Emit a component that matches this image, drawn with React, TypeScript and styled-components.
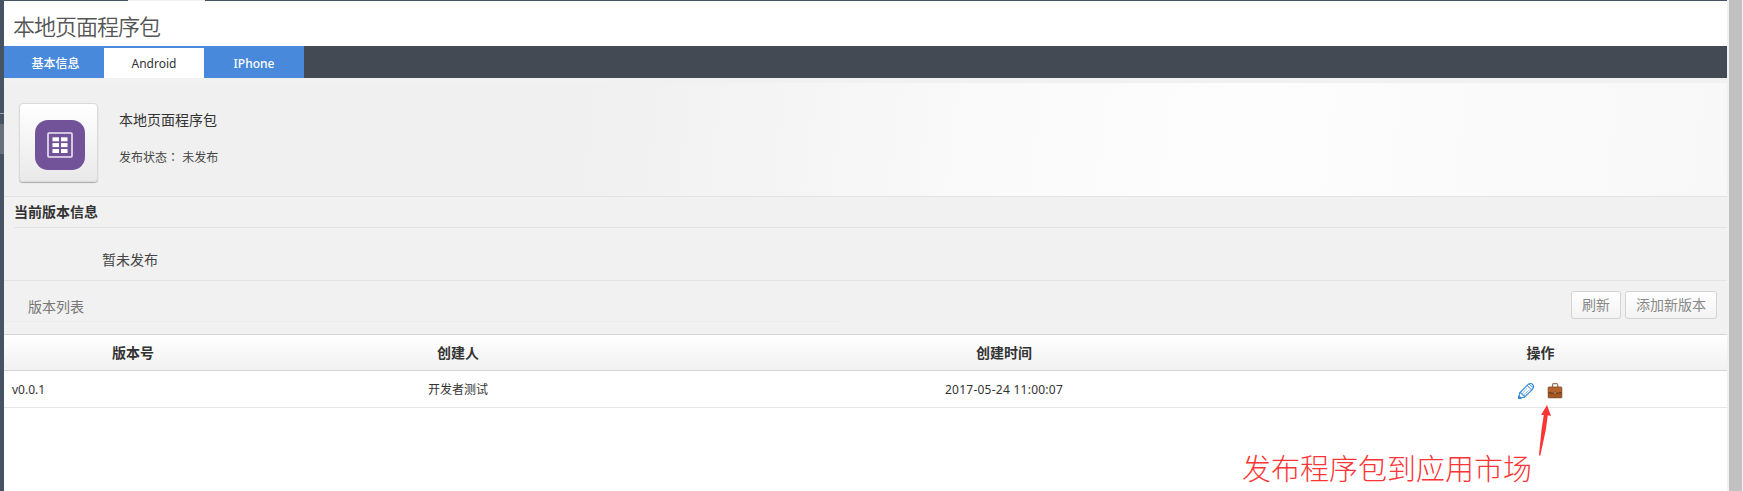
import React from "react";
import styled, { createGlobalStyle } from "styled-components";

const GlobalStyle = createGlobalStyle`
  * { box-sizing: border-box; }
  body {
    margin: 0;
    overflow: hidden;
    background: #fff;
    color: #333;
    font: 12px/1.5 "Noto Sans", "Noto Sans CJK SC", sans-serif;
  }
`;

const Frame = styled.div`
  display: grid;
  grid-template-columns: 4px minmax(0, 1fr) 16px;
  height: 491px;
`;

const Rail = styled.div`
  display: grid;
  grid-template-rows: 113px 1px 10px 30px 1fr;
  background: #465362;
`;

const RailBand = styled.div<{ $color: string; $row: number }>`
  grid-row: ${(p) => p.$row};
  background: ${(p) => p.$color};
`;

const Scrollbar = styled.div`
  padding: 0 1px 0 2px;
  background: #f1f1f1;
`;

const Thumb = styled.div`
  height: 100%;
  background: #c1c1c1;
`;

const Content = styled.main`
  display: flex;
  flex-direction: column;
  background: #fff;
`;

const TopEdge = styled.div`
  flex: none;
  height: 1px;
  background: linear-gradient(90deg, #465362 124px, #f1f1f1 124px, #f1f1f1 201px, #465362 201px);
`;

const PageTitle = styled.h1`
  flex: none;
  height: 45px;
  margin: 0;
  padding: 3px 0 0 9px;
  font-size: 22px;
  font-weight: 350;
  line-height: 45px;
  letter-spacing: -1px;
  color: #555;
`;

const TabBar = styled.nav`
  display: flex;
  flex: none;
  height: 32px;
  background: #444a54;
`;

const Tab = styled.button<{ $active?: boolean; $latin?: boolean }>`
  width: 100px;
  padding: 1px ${(p) => (p.$latin ? 0 : 0)}px 0 ${(p) => (p.$latin ? 0 : 3)}px;
  border: 0;
  border-top: 2px solid #4889db;
  background: ${(p) => (p.$active ? "#fff" : "#4889db")};
  color: ${(p) => (p.$active ? "#333" : "#fff")};
  font: inherit;
  font-weight: ${(p) => (p.$active ? 400 : 500)};
  line-height: 29px;
`;

const Hero = styled.section`
  display: flex;
  gap: 21px;
  height: 114px;
  margin-top: 5px;
  padding: 20px 0 0 15px;
  border-bottom: 1px solid #e3e3e3;
  background: linear-gradient(97deg, #f0f0f0 34%, #f5f5f5 46%, #fafafa 57%, #fdfdfd 72%, #fafafa 87%, #f8f8f8 100%);
`;

const GreyArea = styled.div`
  display: flow-root;
  flex: none;
  background: #f1f1f1;
`;

const AppCard = styled.div`
  display: flex;
  align-items: center;
  justify-content: center;
  width: 79px;
  height: 79px;
  padding: 4px 0 0 2px;
  border: 1px solid #dadada;
  border-radius: 4px;
  background: linear-gradient(#fff, #e9e9e9);
  box-shadow: 0 1px 1px #aaa;
`;

const AppInfo = styled.div`
  padding-top: 7px;
`;

const AppName = styled.div`
  font-size: 14px;
  line-height: 20px;
  margin-bottom: 18px;
`;

const AppStatus = styled.div`
  line-height: 18px;
  color: #444;
`;

const Colon = styled.span`
  font-family: "Noto Sans CJK TC", sans-serif;
`;

const SectionTitle = styled.h2`
  height: 31px;
  margin: 0 0 0 10px;
  border-bottom: 1px solid #e3e3e3;
  font-size: 14px;
  font-weight: 700;
  line-height: 29px;
`;

const CurrentVersion = styled.div`
  height: 53px;
  padding: 11px 0 0 98px;
  border-bottom: 1px solid #e3e3e3;
  font-size: 14px;
  line-height: 42px;
  color: #444;
`;

const ListToolbar = styled.div`
  display: flex;
  align-items: center;
  gap: 4px;
  height: 53px;
  padding: 0 10px 5px 24px;
  background: linear-gradient(#ebebeb, #ebebeb) 0 40px / 836px 1px no-repeat;
`;

const ListTitle = styled.div`
  flex: 1;
  padding-top: 2px;
  font-size: 14px;
  color: #777;
`;

const Button = styled.button<{ $width: number }>`
  width: ${(p) => p.$width}px;
  height: 28px;
  padding: 0;
  border: 1px solid #d4d4d4;
  border-radius: 3px;
  background: linear-gradient(#fff, #f3f3f3);
  color: #888;
  font: inherit;
  font-size: 14px;
  line-height: 26px;
`;

const Table = styled.div`
  flex: none;
`;

const Row = styled.div<{ $header?: boolean }>`
  display: grid;
  grid-template-columns: 258px 392px 700px 373px;
  align-items: center;
  height: 37px;
  border-bottom: 1px solid ${(p) => (p.$header ? "#d2d6da" : "#e4e7e8")};
  ${(p) =>
    p.$header &&
    `
    border-top: 1px solid #d2d4d6;
    background: linear-gradient(#fff, #f1f1f1);
    font-size: 14px;
    font-weight: 700;
  `}
`;

const Cell = styled.div<{ $left?: boolean; $body?: boolean }>`
  padding-top: ${(p) => (p.$body ? 2 : 0)}px;
  padding-left: ${(p) => (p.$left ? 8 : 0)}px;
  text-align: ${(p) => (p.$left ? "left" : "center")};
`;

const DateText = styled.span`
  letter-spacing: 0.25px;
`;

const Actions = styled.div`
  display: flex;
  justify-content: center;
  gap: 13px;
  padding-top: 3px;
`;

const Note = styled.div`
  position: absolute;
  left: 1242px;
  top: 447px;
  color: #fb3535;
  font-size: 29px;
  font-weight: 300;
  line-height: 44px;
  white-space: nowrap;
`;

const Arrow = styled.svg`
  position: absolute;
  left: 1536px;
  top: 404px;
`;

const AppIcon = () => (
  <svg width="50" height="50" viewBox="0 0 50 50">
    <rect width="50" height="50" rx="13" fill="#725399" />
    <rect x="13" y="13" width="24" height="24" rx="1" fill="none" stroke="#ede7f4" strokeWidth="1.6" />
    {[17.3, 23.1, 29].map((y) => (
      <g key={y} fill="#fff">
        <rect x="17.5" y={y} width="6.5" height="4" />
        <rect x="26" y={y} width="6.5" height="4" />
      </g>
    ))}
  </svg>
);

const PencilIcon = () => (
  <svg width="16" height="16" viewBox="0 0 16 16" fill="none" stroke="#3187cf" strokeWidth="1.1" strokeLinejoin="round">
    <path d="M.6 15.4 1.6 10 9.6 1.8Q12.4-.5 14.6 1.4 16.6 3.5 14.4 6.4L6.3 14.3Z" />
    <path d="M1.6 10 3.8 10.2 4.2 11.8 6 12.2 6.3 14.3" />
    <path d="M8.8 2.6 10.4 3.3 11.2 4.9 12.8 5.5 13.5 7.2M10.8 1.2 12.5 2 13.2 3.3 15 4.2" strokeWidth=".9" />
    <path d="m4.8 9.7 4.6-4.5M6.4 11.5l4.8-4.7" strokeWidth=".8" strokeDasharray="1.4 .6" />
    <path d="M.6 15.4 1 13 3 15Z" fill="#3187cf" />
  </svg>
);

const BriefcaseIcon = () => (
  <svg width="16" height="16" viewBox="0 0 16 16">
    <rect x=".5" y="14.5" width="15.3" height="1" fill="#d8d8d8" />
    <path d="M5.5 4V1.8Q5.5.7 6.7.7h2.8q1.2 0 1.2 1.1V4" fill="none" stroke="#957460" strokeWidth="1.2" />
    <rect x="1.2" y="4" width="13.6" height="10.7" rx=".8" fill="#a45621" stroke="#75401f" strokeWidth=".8" />
    <path d="M1.5 4.6h13v4.6L9.5 10h-3l-5-.8Z" fill="#b3632d" />
    <path d="m1.3 9.6 5.2.8h3l5.2-.8" fill="none" stroke="#633015" strokeWidth=".9" />
    <rect x="6.9" y="9.1" width="2.4" height="1.9" rx=".7" fill="#d8ad78" stroke="#633015" strokeWidth=".6" />
  </svg>
);

export default function App() {
  return (
    <>
      <GlobalStyle />
      <Frame>
        <Rail>
          <RailBand $row={2} $color="#9aa0a8" />
          <RailBand $row={4} $color="#68717b" />
        </Rail>
        <Content>
          <TopEdge />
          <PageTitle>本地页面程序包</PageTitle>
          <TabBar>
            <Tab>基本信息</Tab>
            <Tab $active $latin>
              Android
            </Tab>
            <Tab $latin>IPhone</Tab>
          </TabBar>
          <GreyArea>
            <Hero>
              <AppCard>
                <AppIcon />
              </AppCard>
              <AppInfo>
                <AppName>本地页面程序包</AppName>
                <AppStatus>
                  发布状态<Colon>：</Colon> 未发布
                </AppStatus>
              </AppInfo>
            </Hero>
            <SectionTitle>当前版本信息</SectionTitle>
            <CurrentVersion>暂未发布</CurrentVersion>
            <ListToolbar>
              <ListTitle>版本列表</ListTitle>
              <Button $width={50}>刷新</Button>
              <Button $width={92}>添加新版本</Button>
            </ListToolbar>
          </GreyArea>
          <Table>
            <Row $header>
              <Cell>版本号</Cell>
              <Cell>创建人</Cell>
              <Cell>创建时间</Cell>
              <Cell>操作</Cell>
            </Row>
            <Row>
              <Cell $left $body>
                v0.0.1
              </Cell>
              <Cell $body>开发者测试</Cell>
              <Cell $body>
                <DateText>2017-05-24 11:00:07</DateText>
              </Cell>
              <Actions>
                <PencilIcon />
                <BriefcaseIcon />
              </Actions>
            </Row>
          </Table>
        </Content>
        <Scrollbar>
          <Thumb />
        </Scrollbar>
      </Frame>
      <Note>发布程序包到应用市场</Note>
      <Arrow width="20" height="54" viewBox="0 0 20 54">
        <path d="M11 1 15 12 11.8 11.2 9.8 26 4.2 52 3 51 5.6 25 7.8 11 5 11Z" fill="#fb3535" />
      </Arrow>
    </>
  );
}
